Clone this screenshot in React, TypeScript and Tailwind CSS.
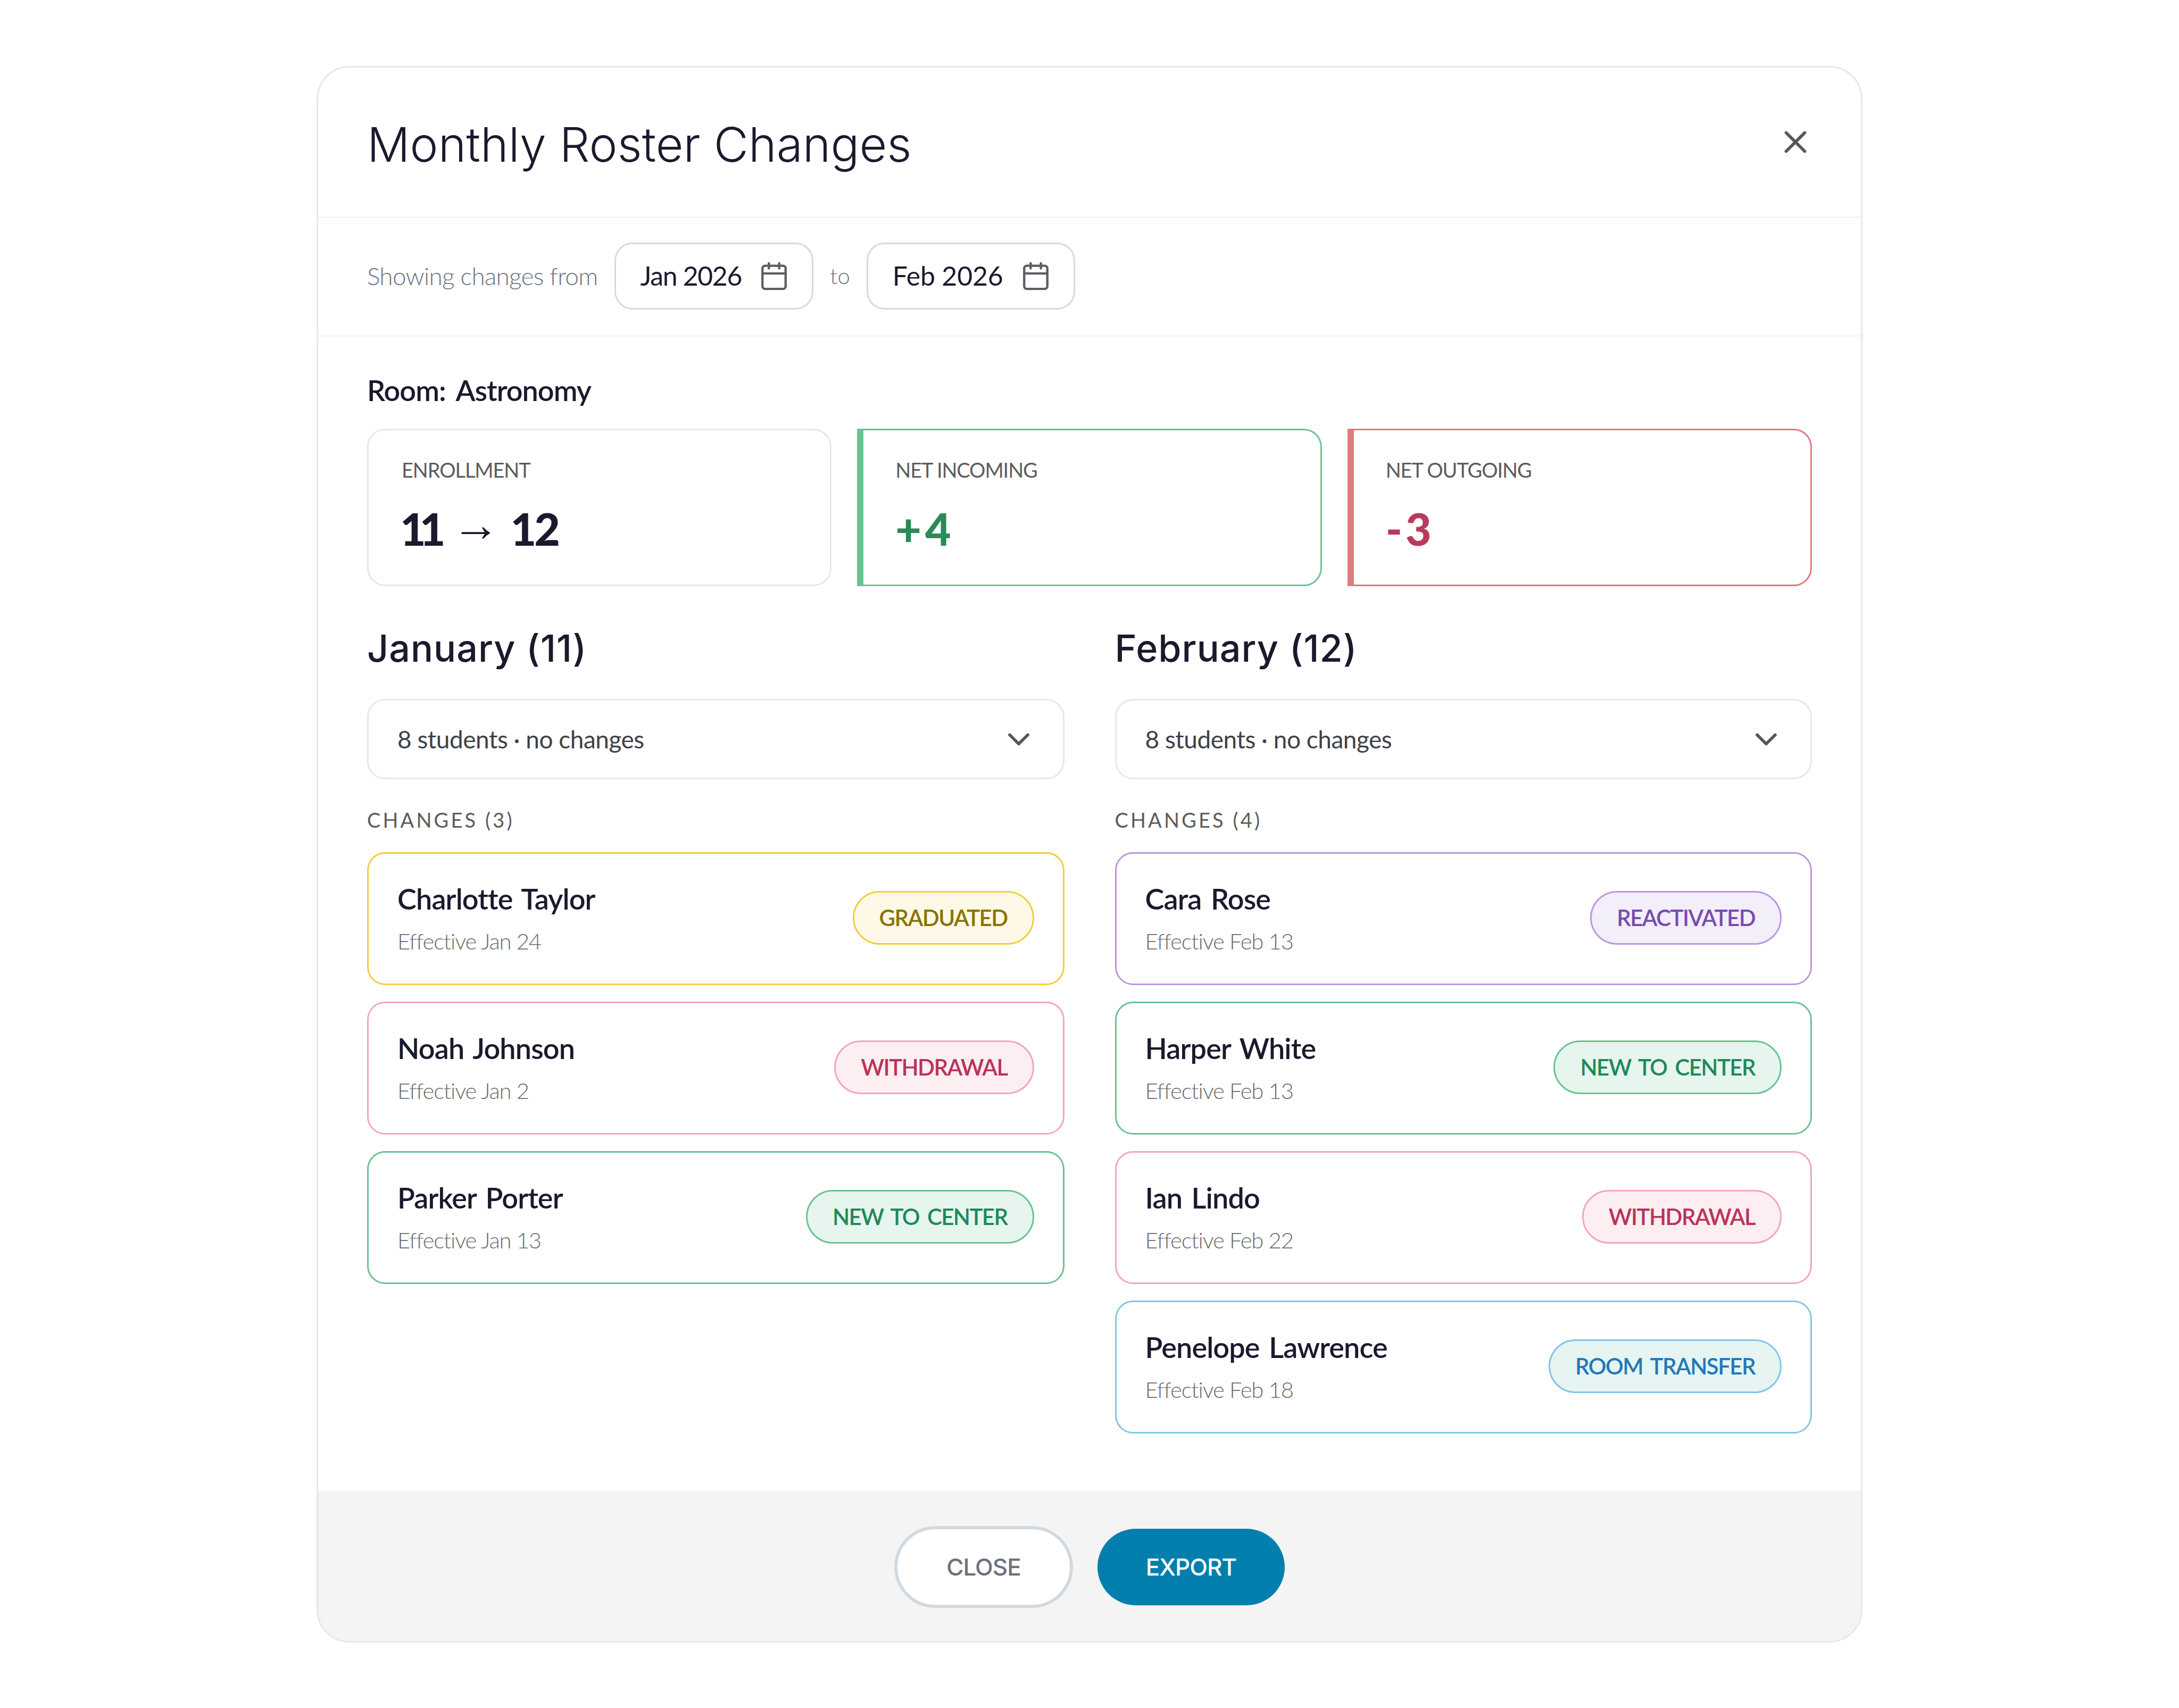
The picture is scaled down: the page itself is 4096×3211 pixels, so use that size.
import React from 'react';
import { Calendar, ChevronDown, X } from 'lucide-react';

type Kind = 'graduated' | 'withdrawal' | 'new' | 'reactivated' | 'transfer';

interface Change {
    name: string;
    date: string;
    kind: Kind;
}

const KINDS: Record<Kind, { label: string; card: string; chip: string }> = {
    graduated: { label: 'GRADUATED', card: 'border-[#f3cd3a]', chip: 'border-[#f3cd3a] bg-[#fef9e7] text-[#8a7300]' },
    withdrawal: { label: 'WITHDRAWAL', card: 'border-[#f4a5bd]', chip: 'border-[#f4a5bd] bg-[#fdeef2] text-[#b9335a]' },
    new: { label: 'NEW TO CENTER', card: 'border-[#68c492]', chip: 'border-[#68c492] bg-[#e7f5ef] text-[#1e8a5a]' },
    reactivated: { label: 'REACTIVATED', card: 'border-[#bb97e0]', chip: 'border-[#bb97e0] bg-[#f2eefa] text-[#7a4bb0]' },
    transfer: { label: 'ROOM TRANSFER', card: 'border-[#80c6e8]', chip: 'border-[#80c6e8] bg-[#e6f4f2] text-[#2279b8]' },
};

const JANUARY: Change[] = [
    { name: 'Charlotte Taylor', date: 'Effective Jan 24', kind: 'graduated' },
    { name: 'Noah Johnson', date: 'Effective Jan 2', kind: 'withdrawal' },
    { name: 'Parker Porter', date: 'Effective Jan 13', kind: 'new' },
];

const FEBRUARY: Change[] = [
    { name: 'Cara Rose', date: 'Effective Feb 13', kind: 'reactivated' },
    { name: 'Harper White', date: 'Effective Feb 13', kind: 'new' },
    { name: 'Ian Lindo', date: 'Effective Feb 22', kind: 'withdrawal' },
    { name: 'Penelope Lawrence', date: 'Effective Feb 18', kind: 'transfer' },
];

const DatePill = ({ label, className }: { label: string; className: string }) => (
    <div className={`flex h-[126px] items-center gap-[32px] rounded-[34px] border-[3px] border-[#d3dbe3] pl-[46px] pr-[42px] text-[50px] text-[#1a1a2e] ${className}`}>
        <span>{label}</span>
        <Calendar size={58} strokeWidth={1.8} className="text-[#5a5f66]" />
    </div>
);

const Stat = ({ label, value, className }: { label: string; value: React.ReactNode; className: string }) => (
    <div className={`h-[296px] pt-[51px] ${className}`}>
        <div className="h-[46px] text-[38px] leading-[46px] tracking-[-1.1px] text-[#5c5c5c]">{label}</div>
        <div className="mt-[42px] h-[92px] text-[84px] font-black leading-[92px]">{value}</div>
    </div>
);

const ChangeCard = ({ change }: { change: Change }) => {
    const kind = KINDS[change.kind];
    return (
        <div className={`flex h-[250px] items-center justify-between rounded-[34px] border-[3px] bg-white pl-[54px] pr-[54px] ${kind.card}`}>
            <div className="mb-[6px]">
                <div className="text-[54px] font-semibold leading-[70px] tracking-[-0.9px] [word-spacing:5px] text-[#1a1a2e]">{change.name}</div>
                <div className="mt-[19px] text-[42px] font-light leading-[50px] tracking-[-1.2px] text-[#6b6b6b]">{change.date}</div>
            </div>
            <span className={`mb-[3px] flex h-[101px] items-center rounded-full border-[3px] px-[47px] text-[42px] font-semibold tracking-[-1.6px] [word-spacing:6px] ${kind.chip}`}>
                {kind.label}
            </span>
        </div>
    );
};

const MonthColumn = ({ title, changes }: { title: string; changes: Change[] }) => (
    <div>
        <h3 className="h-[90px] font-['Inter',sans-serif] text-[70px] font-medium leading-[90px] tracking-[1px] text-[#1a1a2e]">{title}</h3>
        <div className="mt-[50px] flex h-[151px] items-center justify-between rounded-[34px] border-[3px] border-[#e2e8f0] pl-[54px] pr-[49px] text-[46px] tracking-[-0.5px] text-[#3f4147]">
            <span>8 students · no changes</span>
            <ChevronDown size={68} strokeWidth={2} className="text-[#55585e]" />
        </div>
        <div className="mt-[51px] mb-[36px] h-[50px] text-[38px] leading-[50px] tracking-[4.1px] text-[#5c5c5c]">
            CHANGES ({changes.length})
        </div>
        <div className="flex flex-col gap-[31px]">
            {changes.map(change => (
                <ChangeCard key={change.name} change={change} />
            ))}
        </div>
    </div>
);

export default function App() {
    return (
        <div className="flex min-h-[3211px] w-full justify-center bg-white pt-[124px] font-['Lato',sans-serif]">
            <div className="h-[2964px] w-[2906px] overflow-hidden rounded-[62px] border-[3px] border-[#e2e8f0] bg-white">
                <header className="flex h-[283px] items-center justify-between border-b-[3px] border-[#f1f5f9] pl-[92px] pr-[92px]">
                    <h2 className="mt-[10px] font-['Inter',sans-serif] text-[89.5px] font-light text-[#1a1a2e]">Monthly Roster Changes</h2>
                    <X size={70} strokeWidth={2} className="mr-[-4px] text-[#55585e]" />
                </header>

                <div className="flex h-[223px] items-center gap-[31px] border-b-[3px] border-[#f1f5f9] pb-[3px] pl-[92px]">
                    <span className="text-[46px] font-light tracking-[-0.75px] text-[#6b7280]">Showing changes from</span>
                    <DatePill label="Jan 2026" className="tracking-[-1.4px]" />
                    <span className="text-[42px] font-light text-[#6b7280]">to</span>
                    <DatePill label="Feb 2026" className="tracking-[-0.2px]" />
                </div>

                <div className="px-[92px] pt-[66px] pb-[107px]">
                    <div className="h-[70px] text-[54px] font-semibold leading-[70px] tracking-[-1px] [word-spacing:8px] text-[#1a1a2e]">Room: Astronomy</div>

                    <div className="mt-[37px] grid grid-cols-3 gap-[48px]">
                        <Stat
                            label="ENROLLMENT"
                            className="rounded-[34px] border-[3px] border-[#e2e8f0] pl-[62px] text-[#1a1a2e]"
                            value={
                                <span className="ml-[-3px] flex h-[92px]">
                                    <span className="tracking-[-12px]">11</span>
                                    <span className="ml-[24px] mr-[20px] h-[92px] font-['Liberation_Sans',sans-serif] text-[90px] font-normal leading-[76px]">→</span>
                                    <span className="tracking-[-4px]">12</span>
                                </span>
                            }
                        />
                        <Stat
                            label="NET INCOMING"
                            className="rounded-r-[34px] border-[3px] border-l-[12px] border-[#68c492] pl-[60px] text-[#2a8a58]"
                            value={<span className="tracking-[7px]">+4</span>}
                        />
                        <Stat
                            label="NET OUTGOING"
                            className="rounded-r-[34px] border-[3px] border-l-[12px] border-[#e07a80] pl-[60px] text-[#b83a5c]"
                            value={<span className="tracking-[6px]">-3</span>}
                        />
                    </div>

                    <div className="mt-[72px] grid grid-cols-2 gap-[95px]">
                        <MonthColumn title="January (11)" changes={JANUARY} />
                        <MonthColumn title="February (12)" changes={FEBRUARY} />
                    </div>
                </div>

                <footer className="flex h-[288px] items-center justify-center gap-[46px] bg-[#f4f4f4]">
                    <button className="flex h-[154px] w-[336px] items-center justify-center rounded-full border-[6px] border-[#d1d9e0] bg-white font-['Inter',sans-serif] text-[44px] font-medium tracking-[-1px] text-[#6b7280]">
                        CLOSE
                    </button>
                    <button className="flex h-[144px] w-[352px] items-center justify-center rounded-full bg-[#027fad] font-['Inter',sans-serif] text-[44px] font-medium tracking-[-1px] text-white">
                        EXPORT
                    </button>
                </footer>
            </div>
        </div>
    );
}
